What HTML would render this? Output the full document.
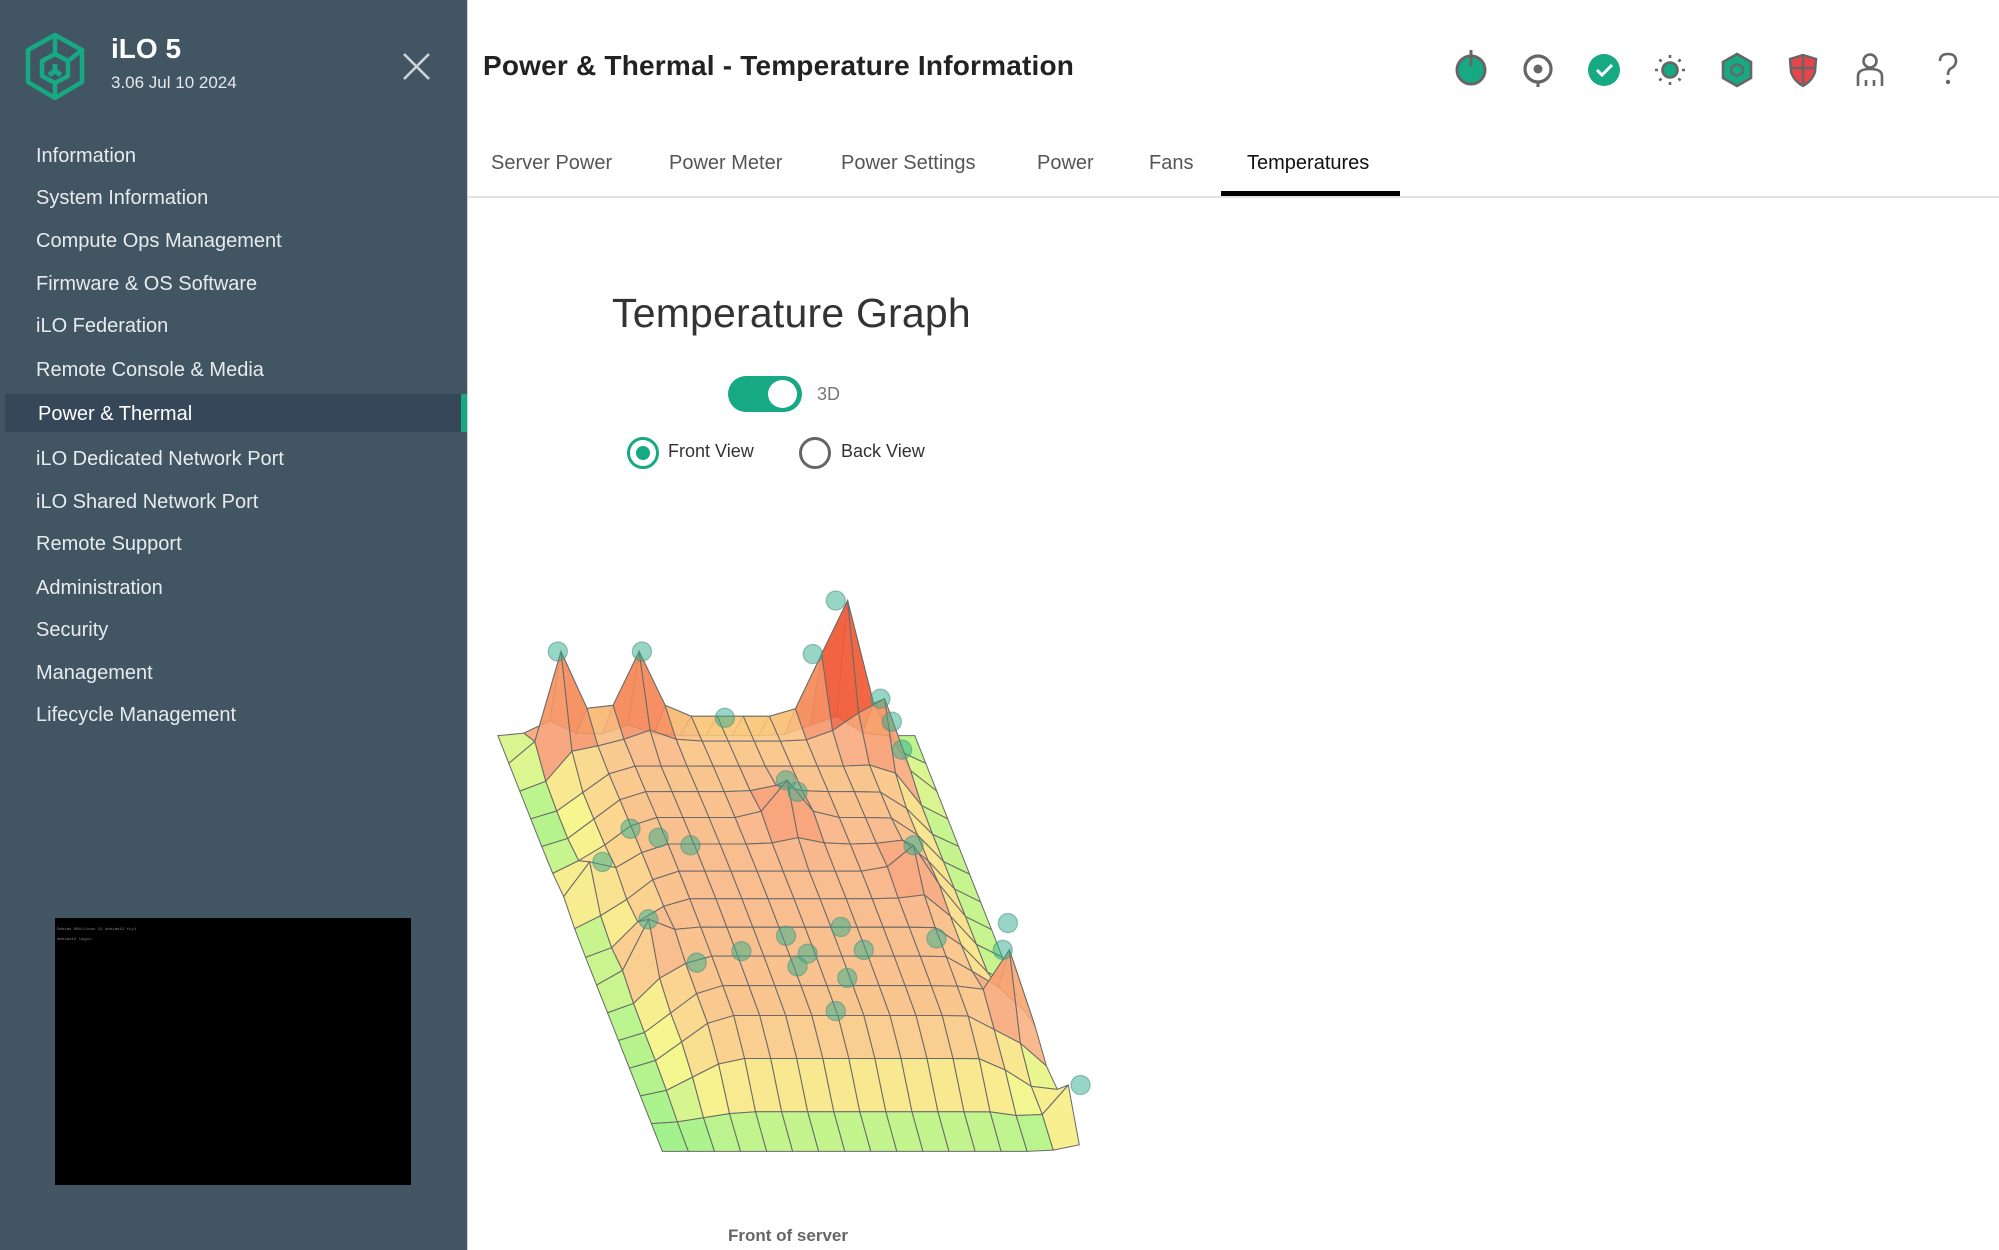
<!DOCTYPE html>
<html><head><meta charset="utf-8"><style>
*{margin:0;padding:0;box-sizing:border-box}
body{width:1999px;height:1250px;overflow:hidden;background:#fff;font-family:"Liberation Sans",sans-serif;position:relative}
.side{position:absolute;left:0;top:0;width:467px;height:1250px;background:#425563}
.abs{position:absolute;white-space:nowrap}
.mi{position:absolute;left:36px;color:#e8ebee;font-size:20px;line-height:24px;transform:translateY(-12px)}
.tab{position:absolute;top:151px;font-size:20px;color:#555;line-height:24px}
</style></head><body>
<div class="side">
  <svg class="abs" style="left:20px;top:30px" width="70" height="75" viewBox="0 0 70 75" fill="none" stroke="#17a884" stroke-width="4.5" stroke-linejoin="round">
    <path d="M35 5 L62 20 L62 52 L35 68 L8 52 L8 20 Z"/>
    <path d="M35 24 L48 31 L48 46 L35 53 L22 46 L22 31 Z"/>
    <path d="M35 5 L35 24 M62 20 L48 31 M35 53 L35 68"/>
    <path d="M35 34 L35 41 M35 41 L29 45 M35 41 L41 45" stroke-width="5"/>
  </svg>
  <div class="abs" style="left:111px;top:33px;font-size:28px;font-weight:bold;color:#fff">iLO 5</div>
  <div class="abs" style="left:111px;top:73px;font-size:17px;color:#e6e9ec">3.06 Jul 10 2024</div>
  <svg class="abs" style="left:402px;top:52px" width="29" height="29" viewBox="0 0 29 29"><path d="M2 2 L27 27 M27 2 L2 27" stroke="#cfd4d8" stroke-width="2.6"/></svg>
  <div class="mi" style="top:156px">Information</div>
  <div class="mi" style="top:198px">System Information</div>
  <div class="mi" style="top:241px">Compute Ops Management</div>
  <div class="mi" style="top:284px">Firmware &amp; OS Software</div>
  <div class="mi" style="top:326px">iLO Federation</div>
  <div class="mi" style="top:370px">Remote Console &amp; Media</div>
  <div class="abs" style="left:5px;top:394px;width:456px;height:38px;background:#36475a"></div>
  <div class="abs" style="left:461px;top:394px;width:6px;height:38px;background:#17a884"></div>
  <div class="mi" style="top:414px;left:38px;color:#fff">Power &amp; Thermal</div>
  <div class="mi" style="top:459px">iLO Dedicated Network Port</div>
  <div class="mi" style="top:502px">iLO Shared Network Port</div>
  <div class="mi" style="top:544px">Remote Support</div>
  <div class="mi" style="top:588px">Administration</div>
  <div class="mi" style="top:630px">Security</div>
  <div class="mi" style="top:673px">Management</div>
  <div class="mi" style="top:715px">Lifecycle Management</div>
  <div class="abs" style="left:55px;top:918px;width:356px;height:267px;background:#000">
    <div style="font-family:'Liberation Mono',monospace;font-size:4px;color:#888;padding:7px 2px;line-height:10px">Debian GNU/Linux 12 debian12 tty1<br>debian12 login:</div>
  </div>
</div>

<div class="abs" style="left:483px;top:50px;font-size:28px;font-weight:bold;color:#222;letter-spacing:0.2px">Power &amp; Thermal - Temperature Information</div>

<svg class="abs" style="left:1452px;top:48px" width="520" height="44" viewBox="0 0 520 44">
  <g transform="translate(19,22)">
    <circle r="14" fill="#17a884" stroke="#666" stroke-width="3"/>
    <path d="M0 -20 V-4" stroke="#666" stroke-width="3"/>
  </g>
  <g transform="translate(86,21)">
    <circle r="13" fill="none" stroke="#666" stroke-width="3.2"/>
    <circle r="4.5" fill="#666"/>
    <path d="M0 13 V18" stroke="#666" stroke-width="3"/>
  </g>
  <g transform="translate(152,22)">
    <circle r="16" fill="#17a884"/>
    <path d="M-7 0 L-2 5 L8 -5" fill="none" stroke="#fff" stroke-width="3"/>
  </g>
  <g transform="translate(218,22)" stroke="#666" stroke-width="2.6">
    <circle r="7.5" fill="#17a884"/>
    <path d="M0 -15 V-12 M0 12 V15 M-15 0 H-12 M12 0 H15 M-10.6 -10.6 L-8.5 -8.5 M8.5 8.5 L10.6 10.6 M-10.6 10.6 L-8.5 8.5 M8.5 -8.5 L10.6 -10.6"/>
  </g>
  <g transform="translate(285,22)">
    <path d="M0 -16 L14 -8 L14 8 L0 16 L-14 8 L-14 -8 Z" fill="#17a884" stroke="#666" stroke-width="2.6"/>
    <path d="M0 -6 L5.5 -3 L5.5 3 L0 6 L-5.5 3 L-5.5 -3 Z" fill="none" stroke="#666" stroke-width="2.2"/>
  </g>
  <g transform="translate(351,22)">
    <path d="M0 -15 L13 -11 L12 2 Q9 11 0 16 Q-9 11 -12 2 L-13 -11 Z" fill="#e8444c" stroke="#666" stroke-width="2.4"/>
    <path d="M0 -13 V14 M-12 -2 H12" stroke="#666" stroke-width="2.4"/>
  </g>
  <g transform="translate(418,22)" fill="none" stroke="#666" stroke-width="2.6">
    <circle cy="-9" r="6.5"/>
    <path d="M-12 16 V6 Q-12 -1 0 -1 Q12 -1 12 6 V16 M-4 10 V16 M4 10 V16"/>
  </g>
  <g transform="translate(496,22)">
    <path d="M-8 -9 Q-8 -16 0 -16 Q8 -16 8 -9 Q8 -4 2 -1 Q0 1 0 5" fill="none" stroke="#666" stroke-width="2.6"/>
    <circle cy="12" r="2.2" fill="#666"/>
  </g>
</svg>

<div class="tab" style="left:491px">Server Power</div>
<div class="tab" style="left:669px">Power Meter</div>
<div class="tab" style="left:841px">Power Settings</div>
<div class="tab" style="left:1037px">Power</div>
<div class="tab" style="left:1149px">Fans</div>
<div class="tab" style="left:1247px;color:#111">Temperatures</div>
<div class="abs" style="left:467px;top:196px;width:1532px;height:2px;background:#e2e2e2"></div>
<div class="abs" style="left:1221px;top:191px;width:179px;height:5px;background:#000"></div>
<div class="abs" style="left:467px;top:0;width:1px;height:1250px;background:#d0d4d8"></div>

<div class="abs" style="left:612px;top:290px;font-size:41px;color:#333;letter-spacing:0.2px">Temperature Graph</div>

<div class="abs" style="left:728px;top:376px;width:74px;height:36px;border-radius:18px;background:#17a884"></div>
<div class="abs" style="left:765px;top:377px;width:35px;height:34px;border-radius:50%;background:#fff;border:3px solid #17a884"></div>
<div class="abs" style="left:817px;top:384px;font-size:18px;color:#777">3D</div>

<div class="abs" style="left:627px;top:437px;width:32px;height:32px;border-radius:50%;border:3px solid #17a884"></div>
<div class="abs" style="left:636px;top:446px;width:14px;height:14px;border-radius:50%;background:#17a884"></div>
<div class="abs" style="left:668px;top:441px;font-size:18px;color:#333">Front View</div>
<div class="abs" style="left:799px;top:437px;width:32px;height:32px;border-radius:50%;border:3px solid #666"></div>
<div class="abs" style="left:841px;top:441px;font-size:18px;color:#333">Back View</div>

<svg id="g" class="abs" style="left:484.5px;top:561px" width="625" height="612" viewBox="380 440 490 480"></svg>

<div class="abs" style="left:728px;top:1226px;font-size:17px;font-weight:bold;color:#666">Front of server</div>

<script>
(function(){
var svg=document.getElementById('g');
var N=16,M=15;
function ramp(t,a){return t<=0?0:t>=a?1:(1-Math.cos(Math.PI*t/a))/2;}
function plate(u,v){return 46*ramp(u,0.25)*ramp(1-u,0.2)*ramp(v,0.03)*ramp(1-v,0.2)*(0.75+0.25*Math.sin(Math.PI*v));}
var apex=[[437,511,0.05],[503,511,0.05],[655,471,0.07],[637,513,0.05],[568,563,0.07],[690,548,0.1],[699,566,0.15],
[541,663,0.4],[716,663,0.45],[508,721,0.6],[546,755,0.65],[664,767,0.65],[734,736,0.6],[786,745,0.75],[847,851,0.95],[616,612,0.3],[655,793,0.75],[472,676,0.4]];
var peaks=apex.map(function(p){var v=p[2],u=(p[0]-390-129*v)/327;u=Math.max(0,Math.min(1,u));
 var i=Math.round(u*N),j=Math.round(v*M);return {i:i,j:j,A:0,Y:p[1]};});
var s=0.75;
function Hij(i,j){var h=plate(i/N,j/M);peaks.forEach(function(p){var d=((i-p.i)*(i-p.i)+(j-p.j)*(j-p.j))/(s*s);h+=p.A*Math.exp(-d);});return h;}
for(var k=0;k<6;k++)peaks.forEach(function(p){var v=p.j/M;var base=577+326*v;var want=base-p.Y;var cur=Hij(p.i,p.j);p.A+=want-cur;if(p.A<0)p.A=0;});
var V=[];for(var j=0;j<=M;j++){V[j]=[];for(var i=0;i<=N;i++){var u=i/N,v=j/M,h=Hij(i,j);V[j][i]=[390+327*u+129*v,577+326*v-h,h];}}
function col(h){var t=Math.max(0,Math.min(1,h/110));var st=[[0,[140,240,120]],[0.15,[245,245,125]],[0.32,[250,205,125]],[0.45,[247,170,122]],[0.75,[246,125,80]],[1,[238,85,55]]];
for(var i=1;i<st.length;i++){if(t<=st[i][0]){var a=st[i-1],b=st[i],f=(t-a[0])/(b[0]-a[0]);return 'rgb('+[0,1,2].map(function(q){return Math.round(a[1][q]+(b[1][q]-a[1][q])*f)}).join(',')+')';}}return 'rgb(238,85,55)';}
var html='';
for(var j=0;j<M;j++){for(var i=0;i<N;i++){var a=V[j][i],b=V[j][i+1],c=V[j+1][i+1],d=V[j+1][i];var h=Math.max(a[2],b[2],c[2],d[2])*0.5+(a[2]+b[2]+c[2]+d[2])/8;
html+='<polygon points="'+[a,b,c,d].map(function(q){return q[0].toFixed(1)+','+q[1].toFixed(1)}).join(' ')+'" fill="'+col(h)+'" fill-opacity="0.85" stroke="#6a6a6a" stroke-width="0.8"/>';}}
var dots=[[437,511],[503,511],[655,471],[637,513],[568,563],[690,548],[699,566],[707,588],[616,612],[625,621],[494,650],[516,657],[541,663],[472,676],[716,663],[508,721],[546,755],[581,746],[616,734],[633,748],[659,727],[625,758],[664,767],[677,745],[734,736],[655,793],[790,724],[786,745],[847,851]];
dots.forEach(function(p){html+='<circle cx="'+p[0]+'" cy="'+p[1]+'" r="7.5" fill="#2fae8e" fill-opacity="0.5" stroke="#4a8c7c" stroke-opacity="0.5" stroke-width="1"/>';});
svg.innerHTML=html;
})();
</script>
</body></html>
